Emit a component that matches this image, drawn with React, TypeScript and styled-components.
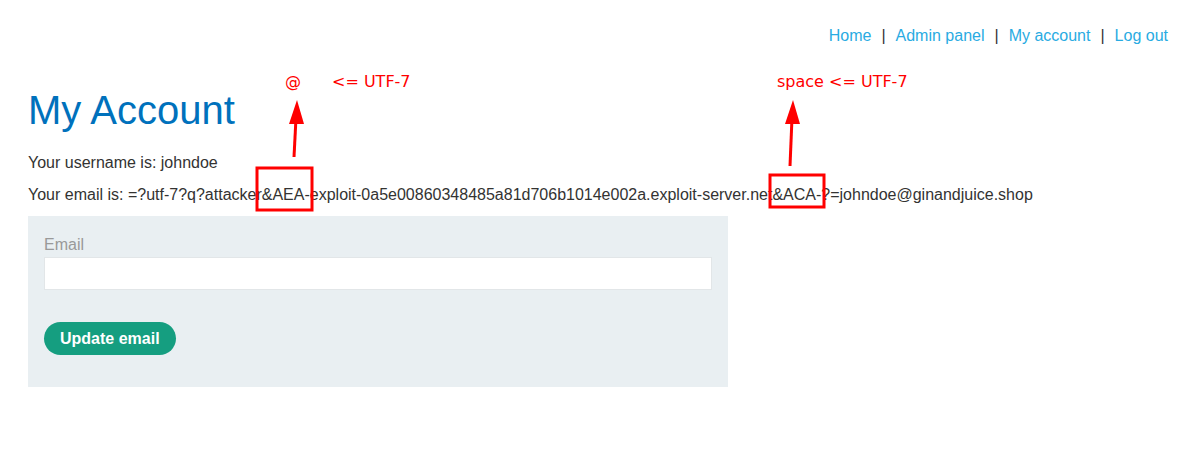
import React from "react";
import styled, { createGlobalStyle } from "styled-components";

const Global = createGlobalStyle`
  html, body { margin: 0; padding: 0; background: #fff; }
  body { font-family: "Liberation Sans", Arial, sans-serif; color: #333332; }
`;

const Page = styled.div`
  position: relative;
  width: 1178px;
  height: 453px;
  overflow: hidden;
`;

const Nav = styled.nav`
  display: flex;
  justify-content: flex-end;
  align-items: center;
  gap: 10px;
  padding: 26px 10px 0 0;
  font-size: 16px;
  line-height: 19px;
`;

const NavLink = styled.a`
  color: #29abe2;
  text-decoration: none;
`;

const Sep = styled.span`
  color: #333332;
`;

const Main = styled.main`
  padding: 0 0 0 28px;
`;

const Title = styled.h1`
  margin: 42px 0 0;
  font-size: 40px;
  font-weight: 400;
  line-height: 46px;
  color: #0071bc;
`;

const Para = styled.p`
  margin: 0;
  font-size: 16px;
  line-height: 19px;
  color: #333332;
  white-space: nowrap;
  & + & { margin-top: 13px; }
`;

const Info = styled.div`
  margin-top: 20px;
`;

const FormBox = styled.form`
  margin-top: 12px;
  width: 700px;
  height: 171px;
  box-sizing: border-box;
  background: #e9eff2;
  padding: 19px 16px 0;
  display: flex;
  flex-direction: column;
  align-items: flex-start;
`;

const Label = styled.label`
  font-size: 16px;
  line-height: 20px;
  color: #999;
`;

const Input = styled.input`
  margin-top: 2px;
  width: 668px;
  height: 33px;
  box-sizing: border-box;
  border: 1px solid #e2e6e8;
  background: #fff;
  outline: none;
`;

const Button = styled.button`
  margin-top: 32px;
  height: 33px;
  padding: 0 16px;
  border: none;
  border-radius: 20px;
  background: #159e80;
  color: #fff;
  font-family: "Liberation Sans", Arial, sans-serif;
  font-weight: 700;
  font-size: 16px;
  cursor: pointer;
`;

const Note = styled.span<{ $x: number; $y: number }>`
  position: absolute;
  left: ${(p) => p.$x}px;
  top: ${(p) => p.$y}px;
  color: #ff0000;
  font-family: "DejaVu Sans", sans-serif;
  font-size: 16px;
  line-height: 20px;
  white-space: pre;
`;

const Overlay = styled.svg`
  position: absolute;
  left: 0;
  top: 0;
  pointer-events: none;
`;

export default function App() {
  return (
    <Page>
      <Global />
      <Nav>
        <NavLink href="#">Home</NavLink>
        <Sep>|</Sep>
        <NavLink href="#">Admin panel</NavLink>
        <Sep>|</Sep>
        <NavLink href="#">My account</NavLink>
        <Sep>|</Sep>
        <NavLink href="#">Log out</NavLink>
      </Nav>
      <Main>
        <Title>My Account</Title>
        <Info>
          <Para>Your username is: johndoe</Para>
          <Para>
            Your email is: =?utf-7?q?attacker&amp;AEA-exploit-0a5e00860348485a81d706b1014e002a.exploit-server.net&amp;ACA-?=johndoe@ginandjuice.shop
          </Para>
        </Info>
        <FormBox onSubmit={(e) => e.preventDefault()}>
          <Label>Email</Label>
          <Input type="email" />
          <Button type="submit">Update email</Button>
        </FormBox>
      </Main>
      <Note $x={285} $y={72}>@</Note>
      <Note $x={332} $y={72}>{"<= UTF-7"}</Note>
      <Note $x={777} $y={72}>{"space <= UTF-7"}</Note>
      <Overlay width={1178} height={453}>
        <rect x={257} y={168} width={55} height={42} fill="none" stroke="#ff0000" strokeWidth={3} />
        <rect x={770} y={175} width={54} height={32} fill="none" stroke="#ff0000" strokeWidth={3} />
        <line x1={294} y1={157} x2={296} y2={118} stroke="#ff0000" strokeWidth={3} />
        <polygon points="297,100 289,124 304,124" fill="#ff0000" />
        <line x1={790} y1={166} x2={792} y2={118} stroke="#ff0000" strokeWidth={3} />
        <polygon points="793,100 785,124 800,124" fill="#ff0000" />
      </Overlay>
    </Page>
  );
}
